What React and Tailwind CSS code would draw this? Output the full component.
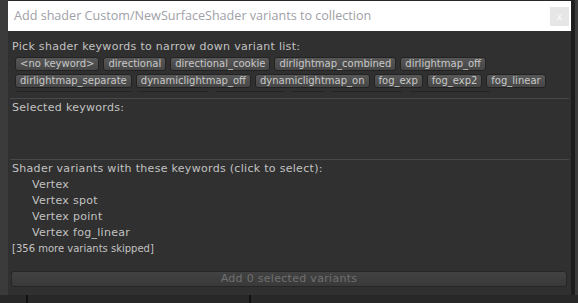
const ROWS = [
  ['<no keyword>', 'directional', 'directional_cookie', 'dirlightmap_combined', 'dirlightmap_off'],
  ['dirlightmap_separate', 'dynamiclightmap_off', 'dynamiclightmap_on', 'fog_exp', 'fog_exp2', 'fog_linear'],
]

// third row is scrolled out of view, only the tops of its buttons show
const HIDDEN_ROW = ['w-[118px]', 'w-[73px]', 'w-[72px]', 'w-[36px]', 'w-[74px]', 'w-[84px]']

const VARIANTS = ['Vertex', 'Vertex spot', 'Vertex point', 'Vertex fog_linear']

const font = { fontFamily: '"DejaVu Sans", Verdana, sans-serif' }

const btn = 'h-[14px] rounded-[3px] border border-[#232323] bg-gradient-to-b from-[#575757] to-[#464646]'

function KeywordButton({ label }) {
  return (
    <div className={`${btn} px-[4px] flex items-center text-[10px] leading-none text-[#c8c8c8] whitespace-nowrap`}>
      {label}
    </div>
  )
}

export default function App() {
  return (
    <div className="w-[578px] h-[303px] overflow-hidden bg-[#282828] flex flex-col" style={font}>
      <div className="flex h-[295px]">
        {/* backdrop left */}
        <div className="w-[8px] bg-[#3b3b3b]" />

        {/* window */}
        <div className="w-[563px] flex flex-col bg-[#303030] mt-[1px]">
          {/* title bar */}
          <div className="h-[30px] bg-white flex items-center justify-between pl-[6px] pr-[2px]">
            <span className="text-[12.6px] text-[#9fa0a8]" style={{ fontFamily: '"Open Sans", "Noto Sans", sans-serif' }}>
              Add shader Custom/NewSurfaceShader variants to collection
            </span>
            <div className="w-[19px] h-[19px] bg-[#e6e6e6] flex items-center justify-center text-[10px] text-[#fafafa]">
              x
            </div>
          </div>

          {/* keyword picker */}
          <div className="h-[61px] overflow-hidden pt-[9px] px-[4px]">
            <div className="text-[11px] tracking-[0.3px] leading-[13px] text-[#c2c2c2]">Pick shader keywords to narrow down variant list:</div>
            <div className="mt-[4px] pl-[3px] flex flex-col gap-[3px]">
              {ROWS.map((row, i) => (
                <div key={i} className="flex gap-[4px]">
                  {row.map((k) => (
                    <KeywordButton key={k} label={k} />
                  ))}
                </div>
              ))}
              <div className="flex gap-[4px]">
                {HIDDEN_ROW.map((w, i) => (
                  <div key={i} className={`${btn} ${w}`} />
                ))}
              </div>
            </div>
          </div>

          {/* selected keywords */}
          <div className="mt-[6px] mx-[2px] border-t border-[#484848] h-[61px] pt-[2px] px-[2px]">
            <div className="text-[11px] tracking-[0.3px] leading-[13px] text-[#c2c2c2]">Selected keywords:</div>
          </div>

          {/* variants */}
          <div className="mx-[2px] border-t border-[#484848] pt-[1px] px-[2px] flex-1 flex flex-col text-[#c2c2c2]">
            <div className="text-[11px] tracking-[0.3px] leading-[16px]">Shader variants with these keywords (click to select):</div>
            {VARIANTS.map((v) => (
              <div key={v} className="pl-[20px] text-[11px] tracking-[0.3px] leading-[16px]">
                {v}
              </div>
            ))}
            <div className="text-[10px] leading-[16px]">[356 more variants skipped]</div>
          </div>

          {/* add button */}
          <div className="mb-[8px] ml-[3px] mr-[4px] h-[16px] rounded-[3px] border border-[#262626] bg-gradient-to-b from-[#424242] to-[#393939] flex items-center justify-center text-[11px] tracking-[0.3px] text-[#707070]">
            Add 0 selected variants
          </div>
        </div>

        {/* backdrop right */}
        <div className="w-[4px] bg-[#1e1e1e]" />
        <div className="flex-1 bg-[#3c3c3c]" />
      </div>

      {/* backdrop bottom */}
      <div className="flex-1 flex">
        <div className="w-[26px]" />
        <div className="w-[2px] bg-[#101010]" />
        <div className="w-[221px]" />
        <div className="w-[2px] bg-[#101010]" />
      </div>
    </div>
  )
}
